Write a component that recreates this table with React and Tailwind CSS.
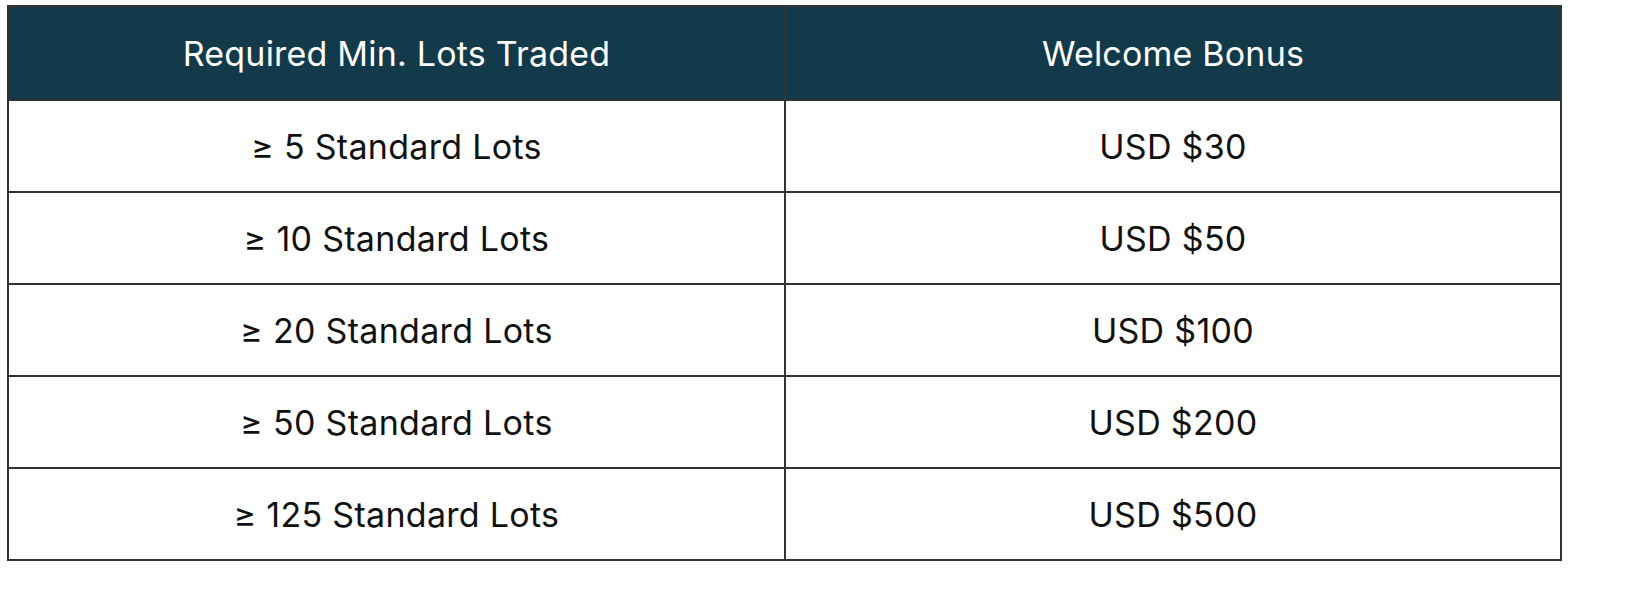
const rows = [
  { lots: "≥ 5 Standard Lots", bonus: "USD $30" },
  { lots: "≥ 10 Standard Lots", bonus: "USD $50" },
  { lots: "≥ 20 Standard Lots", bonus: "USD $100" },
  { lots: "≥ 50 Standard Lots", bonus: "USD $200" },
  { lots: "≥ 125 Standard Lots", bonus: "USD $500" },
];

export default function App() {
  return (
    <div className="bg-white w-[1634px] h-[592px] pt-[5px] pl-[7px] font-['Inter',sans-serif]">
      <table className="w-[1555px] border-collapse border-2 border-[#333]">
        <thead>
          <tr className="bg-[#123a4b] h-[94px]">
            <th className="w-[777px] border-2 border-[#333] text-white font-normal text-[34px] tracking-[0.2px]">
              Required Min. Lots Traded
            </th>
            <th className="border-2 border-[#333] text-white font-normal text-[34px] tracking-[0.2px]">
              Welcome Bonus
            </th>
          </tr>
        </thead>
        <tbody>
          {rows.map((r) => (
            <tr key={r.bonus} className="h-[92px]">
              <td className="border-2 border-[#333] text-center text-[34px] tracking-[0.3px] text-[#111]">
                {r.lots}
              </td>
              <td className="border-2 border-[#333] text-center text-[34px] tracking-[0.3px] text-[#111]">
                {r.bonus}
              </td>
            </tr>
          ))}
        </tbody>
      </table>
    </div>
  );
}
